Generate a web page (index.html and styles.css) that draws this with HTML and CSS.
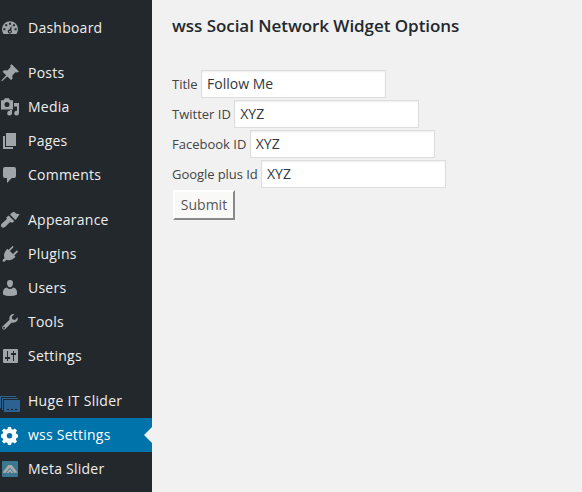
FILE: index.html
```html
<!DOCTYPE html>
<html lang="en">
<head>
<meta charset="utf-8">
<title>wss Settings</title>
<link rel="stylesheet" href="styles.css">
</head>
<body>
<div class="layout">
  <nav class="menu">
    <a class="item"><svg class="icon" viewBox="0 0 20 20"><path fill-rule="evenodd" d="M3.700 16C2.600 14.600 2 13 2 11.200a8 8 0 0 1 16 0c0 1.800-.6 3.400-1.700 4.800zM9 4.800v2h2v-2zM5.200 6.300v2h2v-2zM12.900 6.300v2h2v-2zM3.400 10.200v2h2v-2zM14.600 10.200v2h2v-2zM11.700 7.400l-2.400 4.200a2 2 0 1 0 2 .6zM10 12.700a.9.9 0 1 1 0 1.800.9.9 0 0 1 0-1.800z"/></svg><span>Dashboard</span></a>
    <a class="item group"><svg class="icon" viewBox="0 0 20 20"><path d="M11.700 1.300l7.200 7.100-1.500 1.100-2-.3-3.100 3.200.2 3.300-1.500 1.400-3.700-3.700-5.300 4.800-.7-.6 4.900-5.300-3.600-3.600 1.500-1.500 3.300.3 3.100-3.300-.2-1.900z"/></svg><span>Posts</span></a>
    <a class="item"><svg class="icon" viewBox="0 0 20 20"><path fill-rule="evenodd" d="M5 1.200h4l1 2h3v9.300H1V3.200h2.600zM7 5.100a2.500 2.500 0 1 0 0 5 2.500 2.500 0 0 0 0-5z"/><path d="M14 6h5v10.200a2.400 2.400 0 1 1-2-2.500V9.500h-3zM10 13h2v3.500a2.400 2.400 0 1 1-2-2.700z"/></svg><span>Media</span></a>
    <a class="item"><svg class="icon" viewBox="0 0 20 20"><path d="M6 2h10v13H6zM3 5h2v11h8v2H3z"/></svg><span>Pages</span></a>
    <a class="item"><svg class="icon" viewBox="0 0 20 20"><path d="M5 2h9q2 0 2 2v7q0 2-2 2h-2.200L7 18v-5H5q-2 0-2-2V4q0-2 2-2z"/></svg><span>Comments</span></a>
    <a class="item group"><svg class="icon" viewBox="0 0 20 20"><path d="M11.800 2.700l2.300-.9 2.200 2 3.300.3-2.900 4.300-1.400 1.500-5.300-5.300zM8.700 5.600l5.600 5.600-1.900 1.600-2.300-.7-4.500 4.500Q3 18.500 1.500 17q-1.500-1.700.6-3.700l4.800-4.200-.7-1.700z"/></svg><span>Appearance</span></a>
    <a class="item"><svg class="icon" viewBox="0 0 20 20"><path d="M12.200 2.200q1.300-.4 1.200 1L9.900 7l3.100 3.100 3.600-3.500q1.500 0 1.200 1.400l-3.500 3.500 1.200 1.200-1 1.100q-3.200 3.500-8 1.900l-2 2-1.700-.2-.2-1.600 1.900-2q-1.600-4.700 1.800-8l1.100-1.100 1.200 1.200z"/></svg><span>Plugins</span></a>
    <a class="item"><svg class="icon" viewBox="0 0 20 20"><path d="M10 9.300c-1.800 0-3-1.800-3-4C7 3 8 2 10 2s3 1 3 3.300c0 2.200-1.200 4-3 4zM6.800 9.500Q10 12.500 13.200 9.500q3.500.7 3.800 4.500v2.500q-2.500 1.500-7 1.500t-7-1.500V14q.3-3.800 3.800-4.500z"/></svg><span>Users</span></a>
    <a class="item"><svg class="icon" viewBox="0 0 20 20"><path fill-rule="evenodd" d="M16.700 9.300q-2 2-5 1.200l-6.300 6.400q-1.400 1.300-2.700 0t0-2.600l6.600-6.200q-.8-3 1.200-4.900 1.700-1.500 4-1.100l-2.700 2.700.5 2.500 2.600.6 2.800-2.700q.5 2.600-1 4.100zM4 14.800a.9.9 0 1 0 0 1.800.9.9 0 0 0 0-1.800z"/></svg><span>Tools</span></a>
    <a class="item"><svg class="icon" viewBox="0 0 20 20"><path fill-rule="evenodd" d="M4 3h13q1 0 1 1v12q0 1-1 1H4q-1 0-1-1V4q0-1 1-1zM7 5v6H5v2h2v2h1v-2h2v-2H8V5zM13 5v2h-2v2h2v6h1V9h2V7h-2V5z"/></svg><span>Settings</span></a>
    <a class="item group wide"><svg class="icon slides" viewBox="0 0 20 20"><path d="M0 4h16v1H1v11H0zM2 6h16v1H3v11H2zM4 8h16v12H4z"/><path class="slide-dots" d="M7 17h2v1H7zM11 17h2v1h-2zM15 17h2v1h-2z"/></svg><span>Huge IT Slider</span></a>
    <a class="item current"><svg class="icon" viewBox="0 0 20 20"><path fill-rule="evenodd" d="M8 2h3l.5 2 1.500.7 1.900-1.200 2.100 2.100-1.200 1.900.7 1.500 1.500.5v3l-1.500.5-.7 1.500 1.200 1.900-2.100 2.100-1.900-1.200-1.500.7-.5 2H8l-.5-2-1.500-.7-1.900 1.200L2 16.400l1.200-1.900-.7-1.500-1.500-.5v-3L2.500 9l.7-1.500L2 5.600l2.100-2.100L6 4.700 7.500 4zM9.500 8.100a2.700 2.700 0 1 0 0 5.400 2.700 2.700 0 0 0 0-5.400z"/></svg><span>wss Settings</span></a>
    <a class="item"><svg class="icon meta" viewBox="0 0 20 20"><rect class="meta-box" x="2" y="2" width="16" height="16" rx="1"/><path d="M2.500 13.500L8.300 6h3.400l5.800 7.500-3 .5L10 8.700 5.500 14z"/><path d="M6.500 14L10 10l3.500 4-2 .3L10 12.800l-1.500 1.500z"/></svg><span>Meta Slider</span></a>
  </nav>
  <main class="content">
    <h2>wss Social Network Widget Options</h2>
    <form>
      <label class="row">Title <input type="text" value="Follow Me"></label>
      <label class="row">Twitter ID <input type="text" value="XYZ"></label>
      <label class="row">Facebook ID <input type="text" value="XYZ"></label>
      <label class="row tight">Google plus Id <input type="text" value="XYZ"></label>
      <button type="button">Submit</button>
    </form>
  </main>
</div>
</body>
</html>
```
FILE: styles.css
```css
* { box-sizing: border-box; }
body {
  margin: 0;
  background: #f1f1f1;
  color: #444;
  font: 13px/18px "Open Sans", sans-serif;
  overflow: hidden;
}
.layout { display: flex; height: 492px; }
.menu {
  width: 152px;
  flex: none;
  padding-top: 11px;
  background: #23282d;
}
.item {
  display: flex;
  align-items: center;
  gap: 8px;
  height: 34px;
  color: #eee;
  font-size: 14px;
  letter-spacing: .24px;
  white-space: nowrap;
}
.group { margin-top: 11px; }
.wide { letter-spacing: .3px; }
.icon { width: 20px; height: 20px; flex: none; fill: #a0a5aa; }
.current { position: relative; background: #0073aa; color: #fff; }
.current .icon { fill: #fff; }
.current::after {
  content: "";
  position: absolute;
  right: 0;
  top: 9px;
  border: 8px solid transparent;
  border-left: 0;
  border-right-color: #f1f1f1;
}
.slides { fill: #2b6291; transform: translateY(1px); }
.slide-dots { fill: #17212b; }
.meta { fill: #aaa; }
.meta-box { fill: #3b7890; }
.content { padding: 14px 0 0 20px; }
h2 {
  margin: 0 0 31px;
  color: #23282d;
  font-size: 17px;
  line-height: 24px;
  font-weight: 600;
  letter-spacing: -.05px;
}
.row { display: flex; align-items: center; gap: 3.4px; height: 30px; }
.tight { letter-spacing: -.06px; }
input {
  width: 185px;
  height: 28px;
  padding: 0 5px 2px;
  border: 1px solid #ddd;
  background: #fff;
  box-shadow: inset 0 1px 2px rgba(0, 0, 0, .07);
  color: #32373c;
  font: 14px "Open Sans", sans-serif;
}
button {
  display: block;
  width: 62px;
  height: 30px;
  margin: 1px 0 0 1px;
  padding: 0 0 2px;
  border: 2px solid;
  border-color: #fff #888 #888 #fff;
  background: #f9f9f8;
  color: #555;
  font: 14px "Open Sans", sans-serif;
}
```
